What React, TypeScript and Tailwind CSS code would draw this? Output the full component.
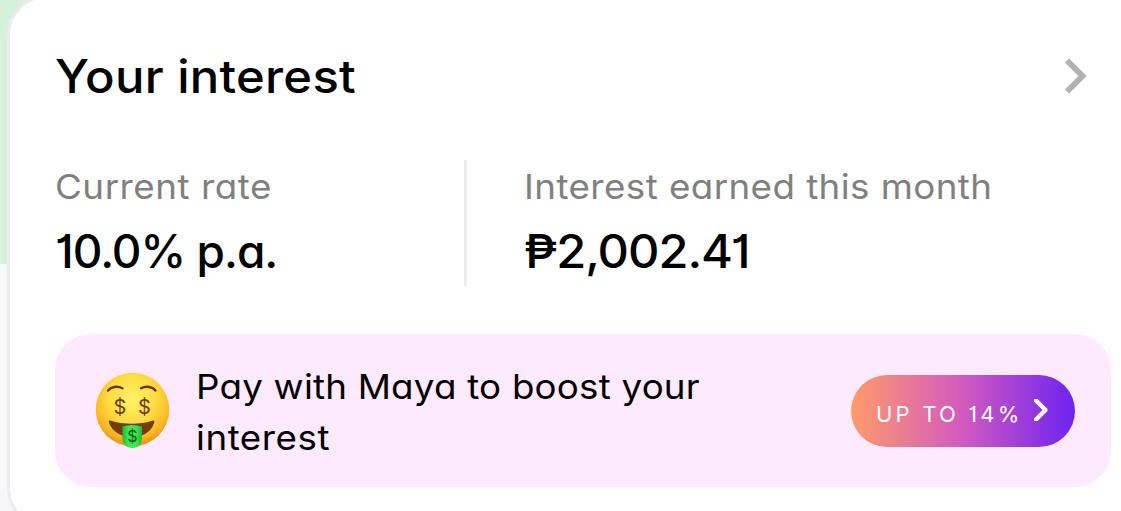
import type { ReactNode } from "react";

function Chevron({ className, strokeWidth, cap }: { className: string; strokeWidth: number; cap?: "round" }) {
  return (
    <svg
      viewBox="0 0 24 36"
      fill="none"
      stroke="currentColor"
      strokeWidth={strokeWidth}
      strokeLinecap={cap ?? "butt"}
      strokeLinejoin={cap ?? "miter"}
      className={className}
      aria-hidden
    >
      <path d="M3 2.500 18.500 18 3 33.500" />
    </svg>
  );
}

function MoneyFace() {
  return (
    <svg viewBox="0 0 76 80" className="h-20 w-[76px] shrink-0" aria-hidden>
      <defs>
        <radialGradient id="face" cx="0.5" cy="0.36" r="0.66">
          <stop offset="0" stopColor="#fff36a" />
          <stop offset="0.5" stopColor="#ffdb40" />
          <stop offset="0.8" stopColor="#f9b726" />
          <stop offset="1" stopColor="#e48a0c" />
        </radialGradient>
        <linearGradient id="tongue" x1="0" x2="1" y1="0" y2="0">
          <stop offset="0" stopColor="#1fb93a" />
          <stop offset="0.3" stopColor="#3fe650" />
          <stop offset="0.7" stopColor="#3fe650" />
          <stop offset="1" stopColor="#1fb93a" />
        </linearGradient>
      </defs>
      <circle cx="38.500" cy="38.500" r="36.800" fill="url(#face)" />
      <path d="M14 19.500c3-3.600 9-5 14.500-2.200M47 17.300c5.500-2.800 11.500-1.400 14.500 2.200" fill="none" stroke="#6b3508" strokeWidth="2.400" strokeLinecap="round" />
      <g fill="#6b3d0b" fontFamily="Inter, sans-serif" textAnchor="middle">
        <text x="26" y="43" fontSize="20">$</text>
        <text x="50.500" y="43" fontSize="20">$</text>
      </g>
      <path d="M16 49.500c14 4.300 30 4.300 43 0 1.500-.3 1.700 1 1.200 2.500C57 61.500 48.500 66 38 66S19 61.500 15 52c-.5-1.700-.5-2.800 1-2.500Z" fill="#743c0a" />
      <path d="M28.500 55.500q9-3 19.500 0V67c0 6-3.700 10-9.700 10s-9.800-4-9.800-10Z" fill="url(#tongue)" />
      <text x="38.300" y="71" fontSize="16" fill="#08541b" fontFamily="Inter, sans-serif" textAnchor="middle">$</text>
    </svg>
  );
}

function Stat({ label, value }: { label: ReactNode; value: ReactNode }) {
  return (
    <div className="flex flex-col whitespace-nowrap pt-[5px]">
      <span className="text-[34.500px] leading-[44px] text-[#808080]">{label}</span>
      <span className="mt-[14px] text-[46px] font-medium leading-[56px] text-black">{value}</span>
    </div>
  );
}

export default function App() {
  return (
    <div className="h-[511px] w-[1121px] overflow-hidden bg-[linear-gradient(to_bottom,#d6f1da_264px,#f7f7fa_264px)] font-[Inter,sans-serif] [font-feature-settings:'cv11','cv01']">
      <section className="-mt-[5px] ml-[7px] h-[533px] w-[1170px] rounded-[40px] border-[3px] border-[#ececee] bg-white pl-[45px]">
        <header className="flex h-[162px] w-[1033px] items-center justify-between pb-1.5">
          <h2 className="origin-left scale-x-[1.065] whitespace-nowrap text-[46px] font-medium leading-[56px] tracking-[0.250px] text-black">
            Your interest
          </h2>
          <Chevron className="h-9 w-6 text-[#b2b2b2]" strokeWidth={6} />
        </header>

        <div className="flex h-[126px]">
          <div className="box-content w-[409px] border-r-[3px] border-[#ececee]">
            <Stat
              label={<span className="inline-block origin-left scale-x-[1.065] tracking-[0.500px]">Current rate</span>}
              value={<span className="tracking-[-1px]">10.0% p.a.</span>}
            />
          </div>
          <div className="pl-[57px]">
            <Stat
              label={<span className="inline-block origin-left scale-x-[1.065] tracking-[0.400px]">Interest earned this month</span>}
              value={<span className="inline-block origin-left scale-x-[1.060] tracking-[-1px]">₱2,002.41</span>}
            />
          </div>
        </div>

        <div className="mt-12 flex h-[153px] w-[1056px] items-center rounded-[36px] bg-[#fdeafe] pl-[39px] pr-9">
          <MoneyFace />
          <p className="ml-[26px] whitespace-nowrap pt-[2px] text-[34.500px] leading-[51px] text-black">
            <span className="block origin-left scale-x-[1.065] tracking-[0.200px]">Pay with Maya to boost your</span>
            <span className="block origin-left scale-x-[1.065] tracking-[0.500px]">interest</span>
          </p>
          <button className="ml-auto flex h-[72px] w-[224px] items-center rounded-full bg-[linear-gradient(to_right,#ff9b6b,#d25abf_50%,#6e23f2)] pl-[25px] text-white">
            <span className="w-[158px] whitespace-nowrap pt-[7px] text-left text-[22px] leading-7 tracking-[3.200px]">UP TO 14%</span>
            <Chevron className="mb-px h-[22px] w-[15px]" strokeWidth={7} cap="round" />
          </button>
        </div>
      </section>
    </div>
  );
}
